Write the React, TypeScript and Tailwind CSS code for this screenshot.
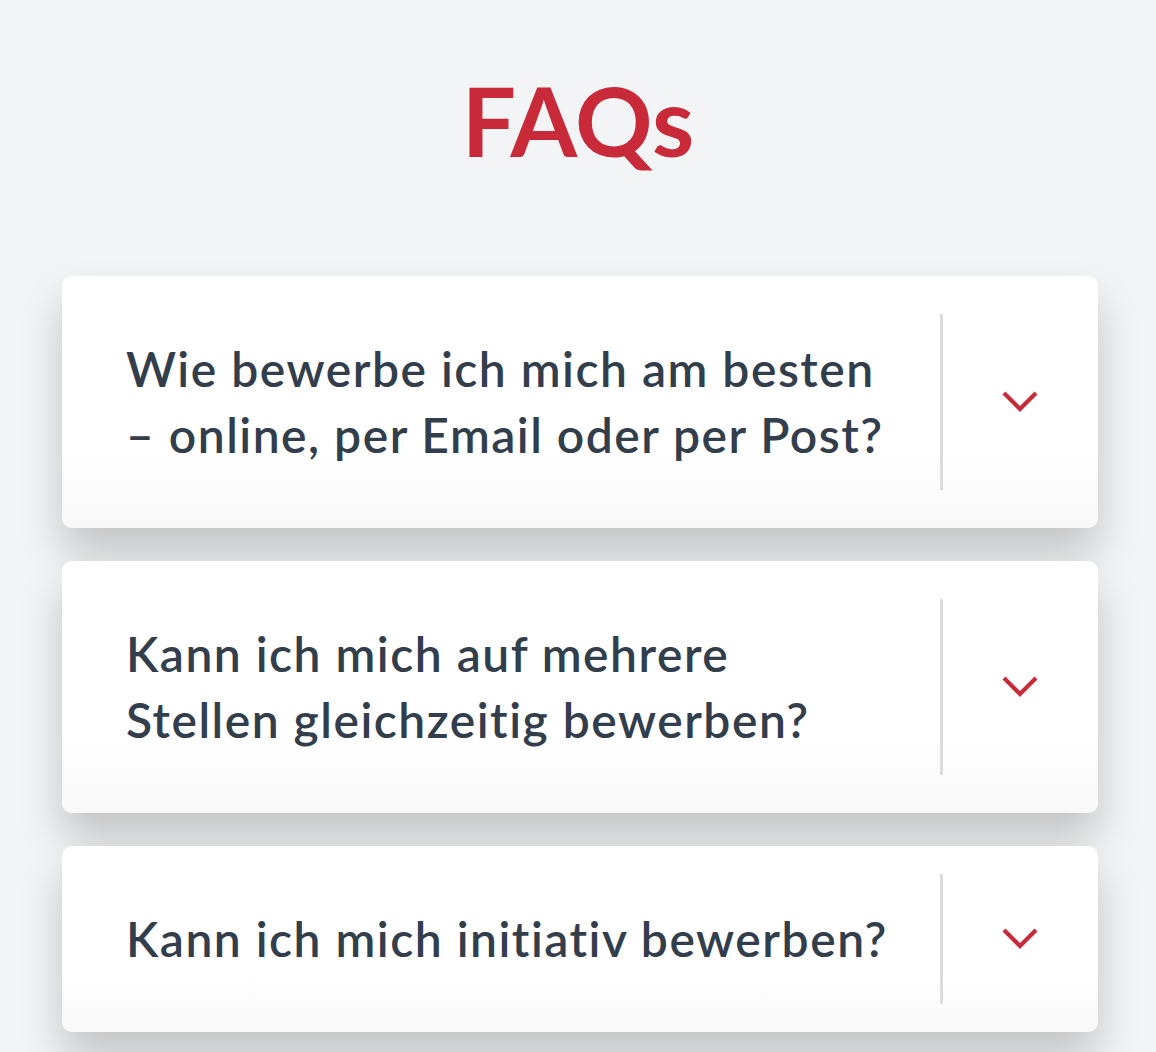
const faqs = [
  "Wie bewerbe ich mich am besten – online, per Email oder per Post?",
  "Kann ich mich auf mehrere Stellen gleichzeitig bewerben?",
  "Kann ich mich initiativ bewerben?",
];

function Chevron() {
  return (
    <svg width="38" height="24" viewBox="0 0 38 24" fill="none" className="text-[#c62b3a]">
      <path d="M3 3 L19 19 L35 3" stroke="currentColor" strokeWidth="4.2" strokeLinecap="butt" strokeLinejoin="miter" />
    </svg>
  );
}

function FaqItem({ question }: { question: string }) {
  return (
    <div className="relative flex items-stretch rounded-[10px] bg-gradient-to-b from-white from-70% to-[#f8f8f8] shadow-[0_26px_44px_rgba(0,0,0,0.2)]">
      <div className="flex-1 py-[60px] pl-16 pr-[52px] text-[48px] leading-[66px] font-semibold tracking-[1.5px] text-[#333e4c]">
        {question}
      </div>
      <div className="flex w-[156px] shrink-0 items-center justify-center">
        <span className="absolute right-[155px] top-[15%] h-[70%] w-[3px] bg-[#dcdcdc]" />
        <Chevron />
      </div>
    </div>
  );
}

export default function App() {
  return (
    <div className="min-h-[1052px] bg-[#f3f4f5] font-['Lato','Noto_Sans',sans-serif]">
      <h1 className="pt-[72px] text-center text-[96px] leading-none font-bold text-[#c92a39]">
        FAQs
      </h1>
      <div className="ml-[62px] mr-[58px] mt-[108px] flex flex-col gap-[33px]">
        {faqs.map((q) => (
          <FaqItem key={q} question={q} />
        ))}
      </div>
    </div>
  );
}
